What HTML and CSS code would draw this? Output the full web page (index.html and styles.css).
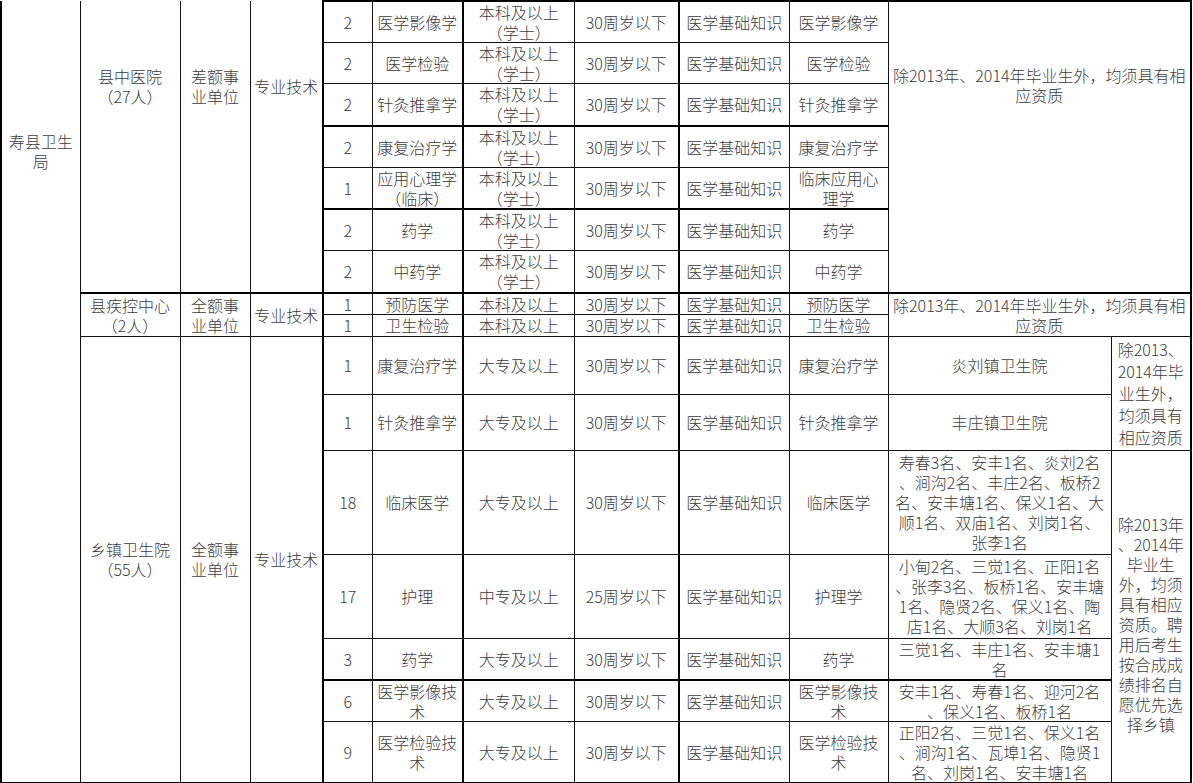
FILE: index.html
```html
<!DOCTYPE html>
<html lang="zh-CN">
<head>
<meta charset="utf-8">
<title>寿县卫生局招聘岗位表</title>
<link rel="stylesheet" href="styles.css">
</head>
<body>
<table class="sheet">
<colgroup>
<col class="w79"><col class="w100"><col class="w70"><col class="w73"><col class="w49"><col class="w91"><col class="w111"><col class="w105"><col class="w110"><col class="w99"><col class="w223"><col class="w80">
</colgroup>
<tbody>
<tr class="h41">
  <td rowspan="16" class="open le bb org">寿县卫生<br>局</td>
  <td rowspan="7" class="open bb top2">县中医院<br>（27人）</td>
  <td rowspan="7" class="open bb top2">差额事<br>业单位</td>
  <td rowspan="7" class="open bb tr top1">专业技术</td>
  <td class="tt">2</td><td class="tt tr">医学影像学</td><td class="tt">本科及以上<br>（学士）</td><td class="tt tr">30周岁以下</td><td class="tt">医学基础知识</td><td class="tt">医学影像学</td>
  <td rowspan="7" colspan="2" class="tt re bb topnote">除2013年、2014年毕业生外，均须具有相<br>应资质</td>
</tr>
<tr class="h41">
  <td>2</td><td class="tr">医学检验</td><td>本科及以上<br>（学士）</td><td class="tr">30周岁以下</td><td>医学基础知识</td><td>医学检验</td>
</tr>
<tr class="h42">
  <td class="bb">2</td><td class="bb tr">针灸推拿学</td><td class="bb">本科及以上<br>（学士）</td><td class="bb tr">30周岁以下</td><td class="bb">医学基础知识</td><td class="bb">针灸推拿学</td>
</tr>
<tr class="h41">
  <td>2</td><td class="tr">康复治疗学</td><td>本科及以上<br>（学士）</td><td class="tr">30周岁以下</td><td>医学基础知识</td><td>康复治疗学</td>
</tr>
<tr class="h42">
  <td class="bb">1</td><td class="bb tr">应用心理学<br>（临床）</td><td class="bb">本科及以上<br>（学士）</td><td class="bb tr">30周岁以下</td><td class="bb">医学基础知识</td><td class="bb">临床应用心<br>理学</td>
</tr>
<tr class="h41">
  <td>2</td><td class="tr">药学</td><td>本科及以上<br>（学士）</td><td class="tr">30周岁以下</td><td>医学基础知识</td><td>药学</td>
</tr>
<tr class="h42">
  <td class="bb">2</td><td class="bb tr">中药学</td><td class="bb">本科及以上<br>（学士）</td><td class="bb tr">30周岁以下</td><td class="bb">医学基础知识</td><td class="bb">中药学</td>
</tr>
<tr class="h21">
  <td rowspan="2">县疾控中心<br>（2人）</td>
  <td rowspan="2">全额事<br>业单位</td>
  <td rowspan="2" class="tr">专业技术</td>
  <td>1</td><td class="tr">预防医学</td><td>本科及以上</td><td class="tr">30周岁以下</td><td>医学基础知识</td><td>预防医学</td>
  <td rowspan="2" colspan="2" class="re">除2013年、2014年毕业生外，均须具有相<br>应资质</td>
</tr>
<tr class="h22">
  <td>1</td><td class="tr">卫生检验</td><td>本科及以上</td><td class="tr">30周岁以下</td><td>医学基础知识</td><td>卫生检验</td>
</tr>
<tr class="h58">
  <td rowspan="7" class="bb">乡镇卫生院<br>（55人）</td>
  <td rowspan="7" class="bb">全额事<br>业单位</td>
  <td rowspan="7" class="bb tr">专业技术</td>
  <td>1</td><td class="tr">康复治疗学</td><td>大专及以上</td><td class="tr">30周岁以下</td><td>医学基础知识</td><td>康复治疗学</td>
  <td>炎刘镇卫生院</td>
  <td rowspan="2" class="re lh22">除2013、<br>2014年毕<br>业生外，<br>均须具有<br>相应资质</td>
</tr>
<tr class="h56">
  <td>1</td><td class="tr">针灸推拿学</td><td>大专及以上</td><td class="tr">30周岁以下</td><td>医学基础知识</td><td>针灸推拿学</td>
  <td>丰庄镇卫生院</td>
</tr>
<tr class="h104">
  <td>18</td><td class="tr">临床医学</td><td>大专及以上</td><td class="tr">30周岁以下</td><td>医学基础知识</td><td>临床医学</td>
  <td>寿春3名、安丰1名、炎刘2名<br>、涧沟2名、丰庄2名、板桥2<br>名、安丰塘1名、保义1名、大<br>顺1名、双庙1名、刘岗1名、<br>张李1名</td>
  <td rowspan="5" class="re bb lownote">除2013年<br>、2014年<br>毕业生<br>外，均须<br>具有相应<br>资质。聘<br>用后考生<br>按合成成<br>绩排名自<br>愿优先选<br>择乡镇</td>
</tr>
<tr class="h84">
  <td>17</td><td class="tr">护理</td><td>中专及以上</td><td class="tr">25周岁以下</td><td>医学基础知识</td><td>护理学</td>
  <td>小甸2名、三觉1名、正阳1名<br>、张李3名、板桥1名、安丰塘<br>1名、隐贤2名、保义1名、陶<br>店1名、大顺3名、刘岗1名</td>
</tr>
<tr class="h41">
  <td class="bb">3</td><td class="bb tr">药学</td><td class="bb">大专及以上</td><td class="bb tr">30周岁以下</td><td class="bb">医学基础知识</td><td class="bb">药学</td>
  <td class="bb">三觉1名、丰庄1名、安丰塘1<br>名</td>
</tr>
<tr class="h41">
  <td>6</td><td class="tr">医学影像技<br>术</td><td>大专及以上</td><td class="tr">30周岁以下</td><td>医学基础知识</td><td>医学影像技<br>术</td>
  <td>安丰1名、寿春1名、迎河2名<br>、保义1名、板桥1名</td>
</tr>
<tr class="h62">
  <td class="bb">9</td><td class="bb tr">医学检验技<br>术</td><td class="bb">大专及以上</td><td class="bb tr">30周岁以下</td><td class="bb">医学基础知识</td><td class="bb">医学检验技<br>术</td>
  <td class="bb">正阳2名、三觉1名、保义1名<br>、涧沟1名、瓦埠1名、隐贤1<br>名、刘岗1名、安丰塘1名</td>
</tr>
</tbody>
</table>
</body>
</html>
```

FILE: styles.css
```css
html, body {
  margin: 0;
  padding: 0;
  background: #ffffff;
}

body {
  font-family: "Noto Sans CJK SC", "Noto Sans", sans-serif;
  font-size: 16px;
  font-weight: 300;
  color: #3c3c3c;
}

.sheet {
  border-collapse: collapse;
  table-layout: fixed;
  width: 1190px;
}

.w79 { width: 79px; }
.w100 { width: 100px; }
.w70 { width: 70px; }
.w73 { width: 73px; }
.w49 { width: 49px; }
.w91 { width: 91px; }
.w111 { width: 111px; }
.w105 { width: 105px; }
.w110 { width: 110px; }
.w99 { width: 99px; }
.w223 { width: 223px; }
.w80 { width: 80px; }

.sheet td {
  border: 1px solid #111;
  padding: 0 2px;
  text-align: center;
  vertical-align: middle;
  line-height: 20px;
  white-space: nowrap;
  overflow: hidden;
}

.h21 { height: 21px; }
.h22 { height: 22px; }
.h41 { height: 41px; }
.h42 { height: 42px; }
.h56 { height: 56px; }
.h58 { height: 58px; }
.h62 { height: 62px; }
.h84 { height: 84px; }
.h104 { height: 104px; }

.sheet td.open { border-top: none; vertical-align: top; }
.sheet td.tt { border-top: 2px solid #000; }
.sheet td.bb { border-bottom: 2px solid #000; }
.sheet td.tr { border-right: 2px solid #000; }
.sheet td.le { border-left: 2px solid #000; }
.sheet td.re { border-right: 2px solid #000; }

.sheet td.org { padding-top: 130px; }
.sheet td.top2 { padding-top: 65px; }
.sheet td.top1 { padding-top: 75px; }
.sheet td.topnote { vertical-align: top; padding-top: 63px; }
.sheet td.lh22 { line-height: 22px; }
.sheet td.lownote { padding-top: 16px; }
```
